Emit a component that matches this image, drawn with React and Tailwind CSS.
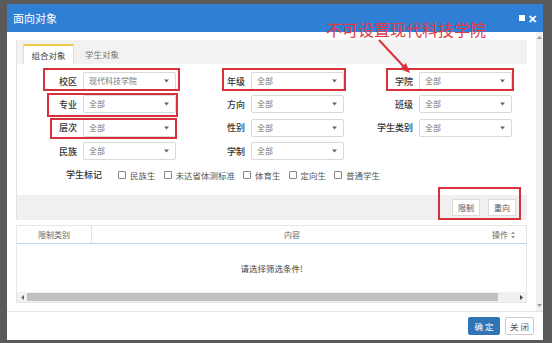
import React from 'react';

const FONT = { fontFamily: '"Noto Sans CJK SC", "Noto Sans", sans-serif' };

function Caret() {
  return (
    <svg width="5" height="4" viewBox="0 0 5 4">
      <path d="M0 0.5 L5 0.5 L2.5 3.5 Z" fill="#666" />
    </svg>
  );
}

function Sel({ value = '全部' }) {
  return (
    <div className="flex h-[18px] w-[93px] items-center justify-between rounded-[2px] border border-[#d9d9d9] bg-white pl-[5px] pr-[6px] text-[8px] leading-none text-[#777]">
      <span>{value}</span>
      <Caret />
    </div>
  );
}

function Field({ label, value }) {
  return (
    <div className="flex w-[168px] items-center">
      <div className="w-[62px] pr-[2px] text-right text-[9px] font-medium leading-none text-[#333]">{label}</div>
      <div className="ml-[4px]">
        <Sel value={value} />
      </div>
    </div>
  );
}

const rows = [
  [['校区', '现代科技学院'], ['年级'], ['学院']],
  [['专业'], ['方向'], ['班级']],
  [['层次'], ['性别'], ['学生类别']],
  [['民族'], ['学制']],
];

const marks = ['民族生', '未达省体测标准', '体育生', '定向生', '普通学生'];

function Box({ className }) {
  return <div className={`absolute border-2 border-[#d8313b] ${className}`} />;
}

export default function App() {
  return (
    <div className="relative h-[343px] w-[552px] overflow-hidden bg-[#5a5a5a] pl-[7px] pt-[4px]" style={FONT}>
      <div className="flex h-[336px] w-[536px] flex-col bg-white">
        {/* title */}
        <div className="flex h-[28px] items-center justify-between bg-[#2f80d5] pl-[6px] pr-[6px]">
          <span className="text-[11px] text-white">面向对象</span>
          <div className="flex items-center gap-[3px]">
            <div className="h-[6px] w-[6px] bg-white" />
            <span className="text-[11px] font-bold leading-none text-white">✕</span>
          </div>
        </div>

        {/* body */}
        <div className="flex h-[279px]">
          <div className="flex-1 px-[9px] pt-[8px]">
            <div className="border-l border-[#e2e2e2]">
              <div className="flex h-[24px] items-end bg-[#f2f2f2] pl-[6px]">
                <div className="flex h-[20px] w-[51px] items-center justify-center border-x border-t-2 border-x-[#dedede] border-t-[#f2c94c] bg-white text-[8.5px] text-[#444]">
                  组合对象
                </div>
                <div className="flex h-[20px] w-[56px] items-center justify-center text-[8.5px] text-[#777]">学生对象</div>
              </div>

              <div className="h-[131px] bg-white pt-[8px]">
                <div className="flex flex-col gap-[5.4px]">
                  {rows.map((r, i) => (
                    <div key={i} className="flex">
                      {r.map(([l, v]) => (
                        <Field key={l} label={l} value={v} />
                      ))}
                    </div>
                  ))}
                </div>
                <div className="mt-[7px] flex h-[16px] items-center">
                  <div className="w-[87px] pr-[2px] text-right text-[9px] font-medium text-[#333]">学生标记</div>
                  <div className="ml-[14px] flex items-center gap-[8px]">
                    {marks.map((m) => (
                      <label key={m} className="flex items-center gap-[4px] text-[8.5px] text-[#555]">
                        <span className="h-[8px] w-[8px] rounded-[1px] border border-[#888] bg-white" />
                        {m}
                      </label>
                    ))}
                  </div>
                </div>
              </div>

              <div className="flex h-[25px] items-center justify-end gap-[8px] bg-[#f0f0f0] pr-[11px]">
                <button className="h-[17px] w-[28px] border border-[#dcdcdc] bg-white text-[8px] text-[#555]">限制</button>
                <button className="h-[17px] w-[28px] border border-[#dcdcdc] bg-white text-[8px] text-[#555]">重向</button>
              </div>
            </div>

            {/* table */}
            <div className="mt-[5px] border border-[#e6e6e6]">
              <div className="flex h-[18px] items-center border-b border-[#bcd6ea] text-[8px] text-[#666]">
                <div className="flex h-full w-[75px] items-center justify-center border-r border-[#e2e2e2]">限制类别</div>
                <div className="flex-1 text-center">内容</div>
                <div className="flex w-[34px] items-center gap-[3px]">
                  <span>操作</span>
                  <svg width="4" height="8" viewBox="0 0 4 8">
                    <path d="M0 3 L2 0.5 L4 3 Z M0 5 L2 7.5 L4 5 Z" fill="#999" />
                  </svg>
                </div>
              </div>
              <div className="flex h-[48px] items-center justify-center text-[8.5px] text-[#444]">请选择筛选条件!</div>
              <div className="flex h-[10px] items-center bg-[#f1f1f1]">
                <div className="flex w-[10px] justify-center">
                  <svg width="3" height="5" viewBox="0 0 3 5"><path d="M3 0 L0 2.5 L3 5 Z" fill="#666" /></svg>
                </div>
                <div className="h-[8px] w-[471px] bg-[#c1c1c1]" />
                <div className="flex-1" />
                <div className="flex w-[10px] justify-center">
                  <svg width="3" height="5" viewBox="0 0 3 5"><path d="M0 0 L3 2.5 L0 5 Z" fill="#444" /></svg>
                </div>
              </div>
            </div>
          </div>

          {/* vertical scrollbar */}
          <div className="flex w-[7px] flex-col items-center justify-between bg-[#f1f1f1] pb-[4px] pt-[4px]">
            <svg width="5" height="3" viewBox="0 0 5 3"><path d="M0 3 L2.5 0 L5 3 Z" fill="#999" /></svg>
            <svg width="5" height="3" viewBox="0 0 5 3"><path d="M0 0 L2.5 3 L5 0 Z" fill="#999" /></svg>
          </div>
        </div>

        {/* footer */}
        <div className="flex flex-1 items-center justify-end gap-[5px] border-t border-[#e5e5e5] pr-[9px]">
          <button className="h-[18px] w-[32px] rounded-[2px] bg-[#3174b6] text-[8.5px] text-white">确 定</button>
          <button className="h-[18px] w-[29px] rounded-[2px] border border-[#ccc] bg-white text-[8.5px] text-[#555]">关 闭</button>
        </div>
      </div>

      {/* annotations */}
      <Box className="left-[43px] top-[68px] h-[23px] w-[137px]" />
      <Box className="left-[222px] top-[68px] h-[23px] w-[124px]" />
      <Box className="left-[386px] top-[68px] h-[23px] w-[128px]" />
      <Box className="left-[47px] top-[93px] h-[24px] w-[131px]" />
      <Box className="left-[50px] top-[118px] h-[21px] w-[127px]" />
      <Box className="left-[438px] top-[187px] h-[33px] w-[83px]" />
      <div className="absolute left-[326px] top-[21px] text-[16px] leading-none text-[#e23a3f]">不可设置现代科技学院</div>
      <svg className="absolute left-[372px] top-[38px]" width="44" height="40" viewBox="0 0 44 40">
        <line x1="7" y1="2" x2="34" y2="31" stroke="#d8313b" strokeWidth="2" />
        <path d="M38 35 L28 31 L34 25 Z" fill="#d8313b" />
      </svg>
    </div>
  );
}
